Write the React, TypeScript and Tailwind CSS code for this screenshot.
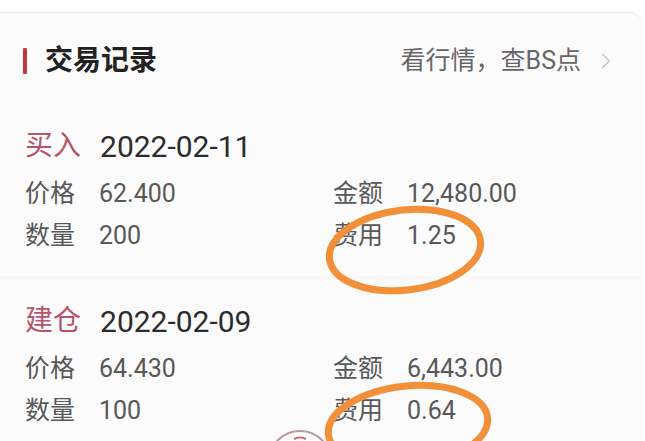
import { ChevronRight } from "lucide-react";

type Field = { label: string; value: string };

type Trade = {
  kind: string;
  date: string;
  left: Field[];
  right: Field[];
};

const trades: Trade[] = [
  {
    kind: "买入",
    date: "2022-02-11",
    left: [
      { label: "价格", value: "62.400" },
      { label: "数量", value: "200" },
    ],
    right: [
      { label: "金额", value: "12,480.00" },
      { label: "费用", value: "1.25" },
    ],
  },
  {
    kind: "建仓",
    date: "2022-02-09",
    left: [
      { label: "价格", value: "64.430" },
      { label: "数量", value: "100" },
    ],
    right: [
      { label: "金额", value: "6,443.00" },
      { label: "费用", value: "0.64" },
    ],
  },
];

function FieldRow({ field }: { field: Field }) {
  return (
    <div className="flex h-[42px] items-center gap-[24px] text-[25px] text-[#585858]">
      <span>{field.label}</span>
      <span>{field.value}</span>
    </div>
  );
}

function TradeBlock({ trade, last }: { trade: Trade; last: boolean }) {
  return (
    <div className={last ? "pt-[22px]" : "border-b border-[#f5f5f5] pb-[20px]"}>
      <div className="flex h-[42px] items-center gap-[19px] pl-[25px]">
        <span className="text-[28px] text-[#b5546b]">{trade.kind}</span>
        <span className="text-[30px] text-[#2c2c2c]">{trade.date}</span>
      </div>
      <div className="mt-[6px] grid grid-cols-[308px_1fr] pl-[25px]">
        <div className="flex flex-col">
          {trade.left.map((f) => (
            <FieldRow key={f.label} field={f} />
          ))}
        </div>
        <div className="flex flex-col">
          {trade.right.map((f) => (
            <FieldRow key={f.label} field={f} />
          ))}
        </div>
      </div>
    </div>
  );
}

export default function App() {
  return (
    <div className="relative h-[441px] w-[645px] overflow-hidden bg-white font-['Roboto','Noto_Sans_CJK_SC',sans-serif]">
      <div className="h-[12px] bg-white" />
      <div className="mr-[4px] h-[429px] rounded-tr-[12px] border-t border-[#ececec] bg-[#fbfbfb] shadow-[0_-1px_3px_rgba(0,0,0,0.04)]">
        <div className="mt-[27px] flex h-[42px] items-center justify-between pl-[23px] pr-[22px]">
          <div className="flex items-center gap-[18px]">
            <span className="h-[26px] w-[4px] rounded-[1px] bg-[#c2383c]" />
            <span className="text-[28px] font-bold text-[#222]">交易记录</span>
          </div>
          <div className="flex items-center gap-[12px] text-[25px] text-[#666]">
            <span>看行情，查BS点</span>
            <ChevronRight className="h-[26px] w-[26px] text-[#c4c4c4]" strokeWidth={1.4} />
          </div>
        </div>
        <div className="mt-[43px]">
          {trades.map((t, i) => (
            <TradeBlock key={t.date} trade={t} last={i === trades.length - 1} />
          ))}
        </div>
      </div>

      {/* hand-drawn annotations laid over the screenshot */}
      <svg
        className="pointer-events-none absolute left-0 top-0"
        width="645"
        height="441"
        viewBox="0 0 645 441"
      >
        <ellipse
          cx="405"
          cy="250"
          rx="76"
          ry="40"
          transform="rotate(-7 405 250)"
          fill="none"
          stroke="#f2903a"
          strokeWidth="7"
        />
        <ellipse
          cx="408"
          cy="426"
          rx="80"
          ry="40"
          transform="rotate(-6 408 426)"
          fill="none"
          stroke="#f2903a"
          strokeWidth="7"
        />
        <circle cx="300" cy="462" r="31" fill="none" stroke="#b89a9a" strokeWidth="2" />
        <path d="M294 439 q6 -3 12 0" fill="none" stroke="#c26a6a" strokeWidth="2" />
      </svg>
    </div>
  );
}
